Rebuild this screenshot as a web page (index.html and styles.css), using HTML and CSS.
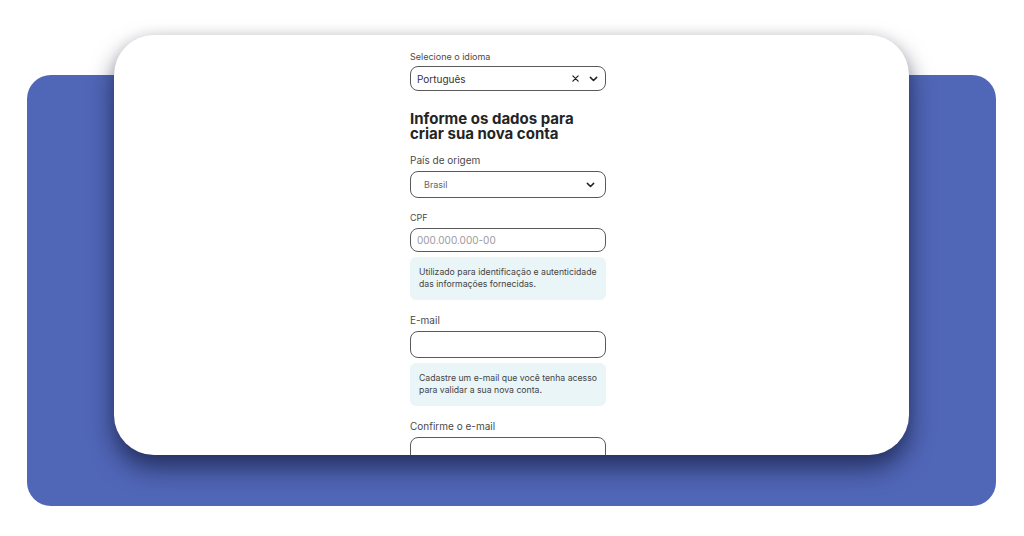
FILE: index.html
```html
<!DOCTYPE html>
<html lang="pt">
<head>
<meta charset="utf-8">
<title>Criar conta</title>
<link rel="stylesheet" href="styles.css">
</head>
<body>
<div class="stage">
  <div class="backdrop"></div>
  <div class="card">
    <form class="form">
      <div class="label small">Selecione o idioma</div>
      <div class="field select lang">
        <span class="value">Português</span>
        <span class="icons">
          <svg class="x" viewBox="0 0 8 8" width="7" height="7"><path d="M1 1L7 7M7 1L1 7" stroke="#222" stroke-width="1.4" fill="none" stroke-linecap="round"/></svg>
          <svg class="chev" viewBox="0 0 10 6" width="9" height="6"><path d="M1.5 1.2L5 4.6L8.5 1.2" stroke="#222" stroke-width="1.7" fill="none" stroke-linecap="round" stroke-linejoin="round"/></svg>
        </span>
      </div>

      <h1 class="title">Informe os dados para criar sua nova conta</h1>

      <div class="label">País de origem</div>
      <div class="field select country">
        <span class="value muted">Brasil</span>
        <svg class="chev" viewBox="0 0 10 6" width="9" height="6"><path d="M1.5 1.2L5 4.6L8.5 1.2" stroke="#222" stroke-width="1.7" fill="none" stroke-linecap="round" stroke-linejoin="round"/></svg>
      </div>

      <div class="label small gap">CPF</div>
      <div class="field input cpf"><span class="placeholder">000.000.000-00</span></div>
      <div class="info">Utilizado para identificação e autenticidade das informações fornecidas.</div>

      <div class="label gap">E-mail</div>
      <div class="field input tall"></div>
      <div class="info">Cadastre um e-mail que você tenha acesso para validar a sua nova conta.</div>

      <div class="label gap">Confirme o e-mail</div>
      <div class="field input tall"></div>
    </form>
  </div>
</div>
</body>
</html>
```

FILE: styles.css
```css
html, body {
  margin: 0;
  padding: 0;
  background: #ffffff;
}

body {
  font-family: Inter, "Noto Sans", "Liberation Sans", sans-serif;
  width: 1024px;
  height: 536px;
  overflow: hidden;
}

.stage {
  display: grid;
}

.backdrop,
.card {
  grid-area: 1 / 1;
}

.backdrop {
  margin: 75px 0 0 27px;
  width: 969px;
  height: 431px;
  background: #5066b7;
  border-radius: 24px;
}

.card {
  margin: 35px 0 0 114px;
  width: 795px;
  height: 420px;
  background: #ffffff;
  border-radius: 40px;
  box-shadow: 0 13px 24px rgba(16, 20, 50, 0.65), 0 -2px 12px rgba(0, 0, 0, 0.06);
  overflow: hidden;
  box-sizing: border-box;
  padding-top: 16px;
}

.form {
  width: 196px;
  margin-left: 296px;
  display: flex;
  flex-direction: column;
}

.label {
  font-size: 10px;
  line-height: 13px;
  color: #4a4a4a;
  margin-bottom: 4px;
}

.label.small {
  font-size: 9px;
  line-height: 12px;
  margin-bottom: 3px;
}

.label.gap {
  margin-top: 14px;
}

.label.small.gap {
  margin-bottom: 4px;
}

.field {
  box-sizing: border-box;
  border: 1px solid #5a5a5a;
  border-radius: 8px;
  display: flex;
  align-items: center;
  font-size: 10px;
  color: #333;
}

.select.lang {
  height: 25px;
  padding: 0 7px 0 6px;
  justify-content: space-between;
}

.select .icons {
  display: flex;
  align-items: center;
  gap: 10px;
}

.select.country {
  height: 27px;
  padding: 0 10px 0 13px;
  justify-content: space-between;
}

.value.muted {
  font-size: 9px;
  color: #666;
}

.title {
  margin: 20px 0 13px;
  font-size: 15px;
  line-height: 15px;
  font-weight: 700;
  color: #242424;
  letter-spacing: 0;
}

.input {
  height: 24px;
  padding: 0 6px;
}

.input.tall {
  height: 27px;
}

.placeholder {
  color: #9a9a9a;
  font-size: 10px;
}

.info {
  margin-top: 5px;
  background: #e9f5f7;
  border-radius: 6px;
  padding: 9px 8px 10px 9px;
  font-size: 8.7px;
  line-height: 12px;
  color: #444;
}
```
